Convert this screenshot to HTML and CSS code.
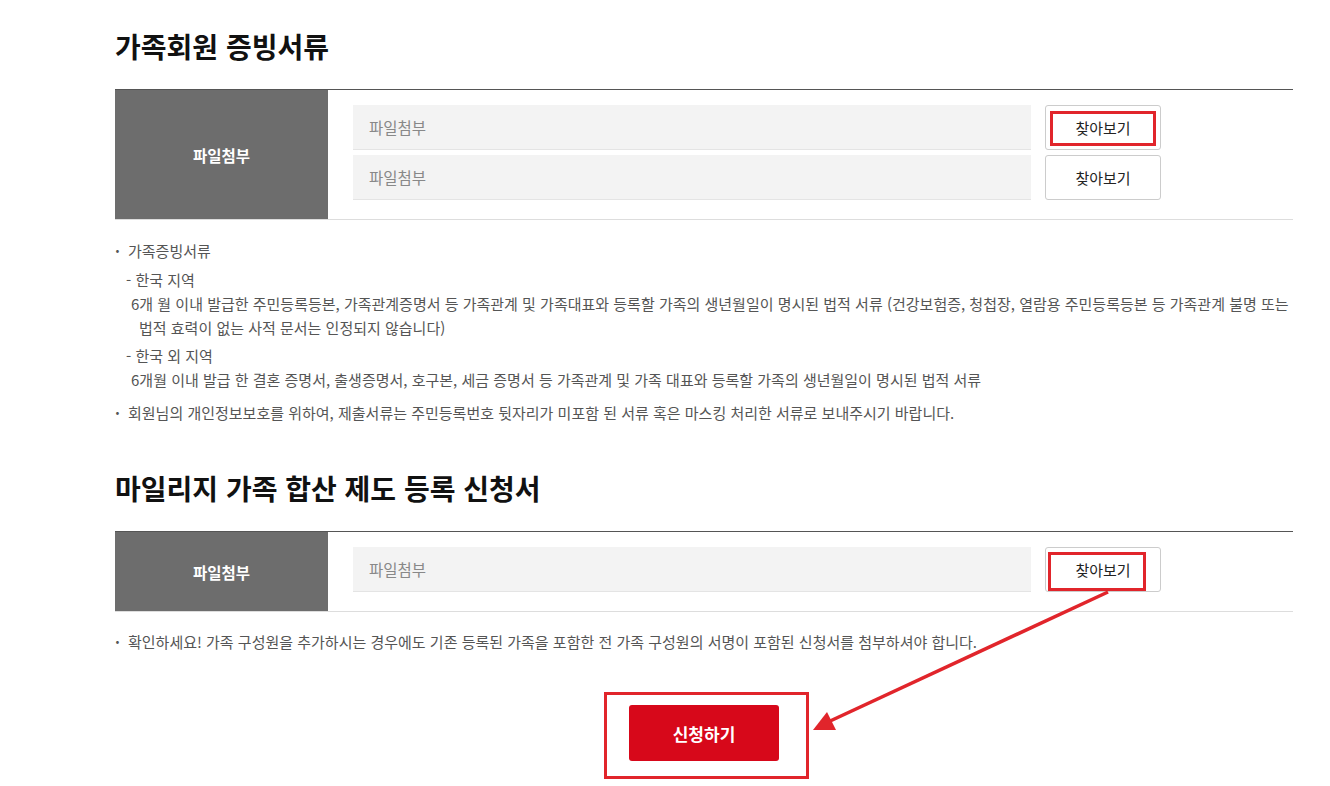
FILE: index.html
```html
<!DOCTYPE html>
<html lang="ko">
<head>
    <meta charset="UTF-8">
    <meta name="viewport" content="width=device-width, initial-scale=1.0">
    <title>가족회원 증빙서류</title>
    <link rel="stylesheet" href="styles.css">
</head>
<body>
    <div class="page">
        <h2 class="sec-title">가족회원 증빙서류</h2>
        <div class="file-table">
            <div class="file-head">파일첨부</div>
            <div class="file-body">
                <div class="file-row">
                    <div class="file-input">파일첨부</div>
                    <button class="find-btn">찾아보기<span class="mark mark-1"></span></button>
                </div>
                <div class="file-row">
                    <div class="file-input">파일첨부</div>
                    <button class="find-btn">찾아보기</button>
                </div>
            </div>
        </div>

        <ul class="notes">
            <li>
                가족증빙서류
                <div class="sub-list">
                    <div class="sub-item">
                        <p class="sub-title">- 한국 지역</p>
                        <p class="sub-desc">6개 월 이내 발급한 주민등록등본, 가족관계증명서 등 가족관계 및 가족대표와 등록할 가족의 생년월일이 명시된 법적 서류 (건강보험증, 청첩장, 열람용 주민등록등본 등 가족관계 불명 또는 법적 효력이 없는 사적 문서는 인정되지 않습니다)</p>
                    </div>
                    <div class="sub-item">
                        <p class="sub-title">- 한국 외 지역</p>
                        <p class="sub-desc">6개월 이내 발급 한 결혼 증명서, 출생증명서, 호구본, 세금 증명서 등 가족관계 및 가족 대표와 등록할 가족의 생년월일이 명시된 법적 서류</p>
                    </div>
                </div>
            </li>
            <li>회원님의 개인정보보호를 위하여, 제출서류는 주민등록번호 뒷자리가 미포함 된 서류 혹은 마스킹 처리한 서류로 보내주시기 바랍니다.</li>
        </ul>

        <h2 class="sec-title sec-title-2">마일리지 가족 합산 제도 등록 신청서</h2>
        <div class="file-table">
            <div class="file-head">파일첨부</div>
            <div class="file-body">
                <div class="file-row">
                    <div class="file-input">파일첨부</div>
                    <button class="find-btn">찾아보기<span class="mark mark-2"></span></button>
                </div>
            </div>
        </div>

        <ul class="notes notes-2">
            <li>확인하세요! 가족 구성원을 추가하시는 경우에도 기존 등록된 가족을 포함한 전 가족 구성원의 서명이 포함된 신청서를 첨부하셔야 합니다.</li>
        </ul>

        <div class="submit-wrap">
            <button class="submit-btn">신청하기<span class="mark mark-3"></span></button>
        </div>
    </div>

    <!-- annotation arrow -->
    <svg class="arrow" width="1330" height="786" viewBox="0 0 1330 786">
        <line x1="1108" y1="592" x2="828" y2="722" stroke="#e1252b" stroke-width="3.5"/>
        <polygon points="813,730 836,730 827,712" fill="#e1252b"/>
    </svg>
</body>
</html>
```

FILE: styles.css
```css
* {
    box-sizing: border-box;
}

body {
    margin: 0;
    background: #fff;
    color: #333;
    font-family: "Noto Sans CJK KR", "Noto Sans", sans-serif;
    position: relative;
    height: 786px;
    overflow: hidden;
}

.page {
    width: 1178px;
    margin-left: 115px;
    padding-top: 28px;
}

.sec-title {
    margin: 0 0 25px;
    font-size: 28px;
    line-height: 36px;
    font-weight: 700;
    color: #111;
}

.sec-title-2 {
    margin-top: 45px;
}

.file-table {
    display: flex;
    border-top: 1px solid #555;
    border-bottom: 1px solid #ddd;
}

.file-head {
    width: 213px;
    background: #6d6d6d;
    color: #fff;
    font-size: 15.5px;
    font-weight: 700;
    display: flex;
    align-items: center;
    justify-content: center;
}

.file-body {
    flex: 1;
    padding: 15px 0 19px 25px;
    display: flex;
    flex-direction: column;
    gap: 5px;
}

.file-row {
    display: flex;
    gap: 14px;
}

.file-input {
    width: 678px;
    height: 45px;
    background: #f3f3f3;
    border-bottom: 1px solid #e4e4e4;
    color: #888;
    font-size: 15.5px;
    line-height: 44px;
    padding-left: 16px;
}

.find-btn {
    position: relative;
    width: 116px;
    height: 45px;
    background: #fff;
    border: 1px solid #ccc;
    border-radius: 3px;
    font-family: inherit;
    font-size: 15px;
    color: #222;
    padding: 0;
}

.mark {
    position: absolute;
    border: 3px solid #e1252b;
    pointer-events: none;
}

.mark-1 {
    left: 4px;
    right: 4px;
    top: 5px;
    bottom: 3px;
}

.mark-2 {
    left: 2px;
    right: 14px;
    top: 4px;
    bottom: 0;
}

.notes {
    list-style: none;
    margin: 19px 0 0;
    padding: 0;
    font-size: 15px;
    line-height: 24px;
    color: #555;
}

.notes > li {
    position: relative;
    padding-left: 13px;
}

.notes > li::before {
    content: "·";
    position: absolute;
    left: 0;
    font-weight: 700;
}

.notes > li + li {
    margin-top: 9px;
}

.sub-list {
    margin-top: 5px;
    margin-left: -2px;
}

.sub-item + .sub-item {
    margin-top: 4px;
}

.sub-item p {
    margin: 0;
}

.sub-desc {
    padding-left: 13px;
    text-indent: -8px;
}

.notes-2 {
    margin-top: 18px;
}

.submit-wrap {
    display: flex;
    justify-content: center;
    margin-top: 51px;
}

.submit-btn {
    position: relative;
    width: 150px;
    height: 56px;
    background: #d7081a;
    color: #fff;
    border: none;
    border-radius: 3px;
    font-family: inherit;
    font-size: 17px;
    font-weight: 700;
}

.mark-3 {
    left: -25px;
    right: -30px;
    top: -13px;
    bottom: -18px;
}

.arrow {
    position: absolute;
    left: 0;
    top: 0;
    pointer-events: none;
}
```
